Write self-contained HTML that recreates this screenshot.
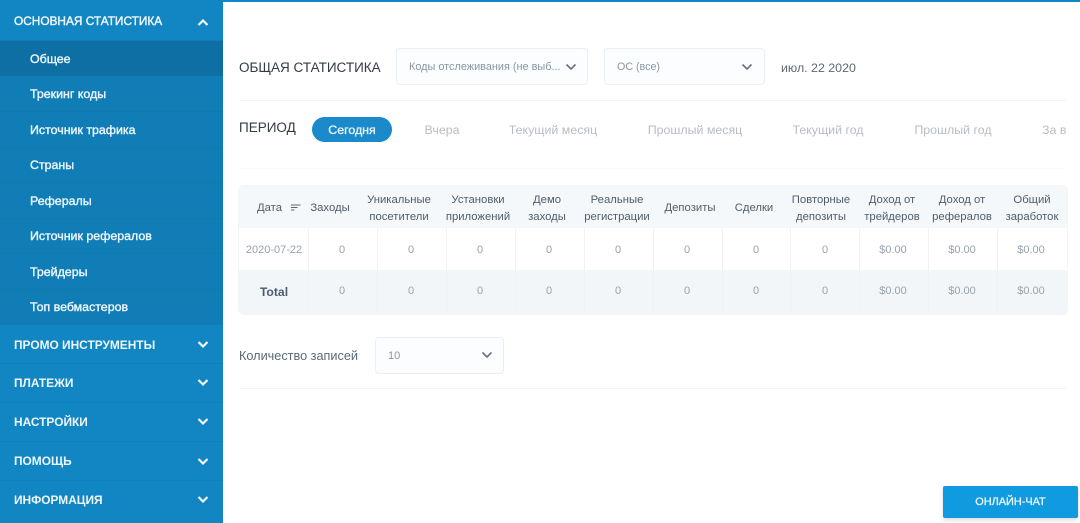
<!DOCTYPE html>
<html lang="ru"><head><meta charset="utf-8"><title>Статистика</title>
<style>
html,body{margin:0;padding:0;width:1080px;height:523px;overflow:hidden;background:#fff;font-family:"Liberation Sans",sans-serif}
.a{position:absolute;white-space:nowrap}
.c{position:absolute;white-space:nowrap;text-align:center;transform:translateX(-50%)}
.side{position:absolute;left:0;top:0;width:223px;height:523px;background:#1285c3}
.sub{position:absolute;left:0;top:40px;width:223px;height:285px;background:#107db7}
.act{position:absolute;left:0;top:41px;width:223px;height:35px;background:#0e6fa4}
.si{position:absolute;left:30px;color:#eaf5fb;font-size:12.4px;-webkit-text-stroke:.4px #eaf5fb;line-height:16px;white-space:nowrap}
.mi{position:absolute;left:14px;color:#eef7fc;font-size:11.9px;font-weight:bold;line-height:16px;white-space:nowrap}
.sl{position:absolute;left:0;width:223px;height:1px;background:#1179b0}
.ml{position:absolute;left:0;width:223px;height:1px;background:#117fba}
svg{position:absolute;display:block}
.sel{position:absolute;background:#fbfdfe;border:1px solid #e9f0f4;border-radius:4px;box-sizing:border-box}
.hr{position:absolute;height:1px;background:#f2f5f7}
.per{color:#b6bdc4;font-size:12.4px;line-height:16px}
.th{color:#4f5d6b;font-size:11.3px;line-height:17px}
.td{color:#98a2ad;font-size:11px;line-height:14px}
.vl{position:absolute;width:1px;background:#eef2f5}
</style></head><body>
<div class="a" style="left:0;top:0;width:1080px;height:2px;background:#1285c3"></div>
<div class="side"></div>
<div class="sub"></div>
<div class="act"></div>
<div class="sl" style="top:111px"></div><div class="sl" style="top:147px"></div><div class="sl" style="top:182px"></div><div class="sl" style="top:218px"></div><div class="sl" style="top:253px"></div><div class="sl" style="top:289px"></div>
<div class="ml" style="top:363px"></div><div class="ml" style="top:402px"></div><div class="ml" style="top:441px"></div><div class="ml" style="top:480px"></div>

<div class="mi" style="top:13px;font-weight:normal;font-size:11.85px;-webkit-text-stroke:.4px #eef7fc">ОСНОВНАЯ СТАТИСТИКА</div>
<svg style="left:197px;top:18px" width="12" height="9" viewBox="0 0 12 9"><path d="M1.5 7L6 2.5L10.5 7" fill="none" stroke="#f2f9fd" stroke-width="2.2"/></svg>
<div class="si" style="top:51px">Общее</div>
<div class="si" style="top:86px">Трекинг коды</div>
<div class="si" style="top:122px">Источник трафика</div>
<div class="si" style="top:157px">Страны</div>
<div class="si" style="top:193px">Рефералы</div>
<div class="si" style="top:228px">Источник рефералов</div>
<div class="si" style="top:264px">Трейдеры</div>
<div class="si" style="top:299px">Топ вебмастеров</div>
<div class="mi" style="top:337px">ПРОМО ИНСТРУМЕНТЫ</div>
<div class="mi" style="top:375px">ПЛАТЕЖИ</div>
<div class="mi" style="top:414px">НАСТРОЙКИ</div>
<div class="mi" style="top:453px">ПОМОЩЬ</div>
<div class="mi" style="top:492px">ИНФОРМАЦИЯ</div>
<svg style="left:197px;top:340px" width="12" height="9" viewBox="0 0 12 9"><path d="M1.5 2L6 6.5L10.5 2" fill="none" stroke="#f2f9fd" stroke-width="2.2"/></svg>
<svg style="left:197px;top:378px" width="12" height="9" viewBox="0 0 12 9"><path d="M1.5 2L6 6.5L10.5 2" fill="none" stroke="#f2f9fd" stroke-width="2.2"/></svg>
<svg style="left:197px;top:417px" width="12" height="9" viewBox="0 0 12 9"><path d="M1.5 2L6 6.5L10.5 2" fill="none" stroke="#f2f9fd" stroke-width="2.2"/></svg>
<svg style="left:197px;top:457px" width="12" height="9" viewBox="0 0 12 9"><path d="M1.5 2L6 6.5L10.5 2" fill="none" stroke="#f2f9fd" stroke-width="2.2"/></svg>
<svg style="left:197px;top:495px" width="12" height="9" viewBox="0 0 12 9"><path d="M1.5 2L6 6.5L10.5 2" fill="none" stroke="#f2f9fd" stroke-width="2.2"/></svg>

<div class="a" style="left:239px;top:59px;color:#333b44;font-size:13.5px;line-height:18px">ОБЩАЯ СТАТИСТИКА</div>
<div class="sel" style="left:396px;top:48px;width:192px;height:37px"></div>
<div class="a" style="left:409px;top:60px;color:#8a96a3;font-size:10.9px;line-height:15px">Коды отслеживания (не выб...</div>
<svg style="left:565px;top:63px" width="12" height="8" viewBox="0 0 12 8"><path d="M1.5 1.5L6 6L10.5 1.5" fill="none" stroke="#66727f" stroke-width="1.6"/></svg>
<div class="sel" style="left:604px;top:48px;width:161px;height:37px"></div>
<div class="a" style="left:617px;top:60px;color:#8a96a3;font-size:10.7px;line-height:15px">ОС (все)</div>
<svg style="left:741px;top:63px" width="12" height="8" viewBox="0 0 12 8"><path d="M1.5 1.5L6 6L10.5 1.5" fill="none" stroke="#66727f" stroke-width="1.6"/></svg>
<div class="a" style="left:781px;top:61px;color:#5d6874;font-size:12.4px;line-height:15px">июл. 22 2020</div>
<div class="hr" style="left:239px;top:100px;width:827px"></div>

<div class="a" style="left:239px;top:119px;color:#333b44;font-size:13.5px;line-height:18px">ПЕРИОД</div>
<div class="a" style="left:312px;top:117px;width:80px;height:25px;border-radius:13px;background:#1a8acb"></div>
<div class="c" style="left:352px;top:122px;color:#e4f2fa;font-size:12.4px;line-height:16px;-webkit-text-stroke:.35px #e4f2fa">Сегодня</div>
<div class="c per" style="left:442px;top:122px">Вчера</div>
<div class="c per" style="left:553px;top:122px">Текущий месяц</div>
<div class="c per" style="left:695px;top:122px">Прошлый месяц</div>
<div class="c per" style="left:828px;top:122px">Текущий год</div>
<div class="c per" style="left:953px;top:122px">Прошлый год</div>
<div class="a per" style="left:1042px;top:122px">За в</div>
<div class="hr" style="left:239px;top:168px;width:827px;background:#fafbfc"></div>

<div class="a" style="left:239px;top:186px;width:828px;height:128px;border-radius:5px;background:#fff;box-shadow:0 0 0 1px #f3f5f7;overflow:hidden">
  <div class="a" style="left:0;top:0;width:828px;height:42px;background:#f5f8fa"></div>
  <div class="a" style="left:0;top:84px;width:828px;height:44px;background:#f3f6f8"></div>
</div>
<div class="vl" style="left:308px;top:228px;height:86px"></div>
<div class="vl" style="left:377px;top:228px;height:86px"></div>
<div class="vl" style="left:446px;top:228px;height:86px"></div>
<div class="vl" style="left:515px;top:228px;height:86px"></div>
<div class="vl" style="left:584px;top:228px;height:86px"></div>
<div class="vl" style="left:653px;top:228px;height:86px"></div>
<div class="vl" style="left:722px;top:228px;height:86px"></div>
<div class="vl" style="left:790px;top:228px;height:86px"></div>
<div class="vl" style="left:859px;top:228px;height:86px"></div>
<div class="vl" style="left:928px;top:228px;height:86px"></div>
<div class="vl" style="left:997px;top:228px;height:86px"></div>

<div class="a th" style="left:257px;top:200px">Дата</div>
<svg style="left:291px;top:204px" width="10" height="8" viewBox="0 0 10 8"><path d="M0 1H9.5M0 3.5H6.5M0 6H3.5" fill="none" stroke="#5b6875" stroke-width="1"/></svg>
<div class="c th" style="left:330px;top:200px">Заходы</div>
<div class="c th" style="left:399px;top:192px">Уникальные<br>посетители</div>
<div class="c th" style="left:478px;top:192px">Установки<br>приложений</div>
<div class="c th" style="left:547px;top:192px">Демо<br>заходы</div>
<div class="c th" style="left:617px;top:192px">Реальные<br>регистрации</div>
<div class="c th" style="left:690px;top:200px">Депозиты</div>
<div class="c th" style="left:754px;top:200px">Сделки</div>
<div class="c th" style="left:821px;top:192px">Повторные<br>депозиты</div>
<div class="c th" style="left:892px;top:192px">Доход от<br>трейдеров</div>
<div class="c th" style="left:962px;top:192px">Доход от<br>рефералов</div>
<div class="c th" style="left:1032px;top:192px">Общий<br>заработок</div>

<div class="c td" style="left:274px;top:243px">2020-07-22</div>
<div class="c td" style="left:342px;top:243px">0</div>
<div class="c td" style="left:411px;top:243px">0</div>
<div class="c td" style="left:480px;top:243px">0</div>
<div class="c td" style="left:549px;top:243px">0</div>
<div class="c td" style="left:618px;top:243px">0</div>
<div class="c td" style="left:687px;top:243px">0</div>
<div class="c td" style="left:756px;top:243px">0</div>
<div class="c td" style="left:825px;top:243px">0</div>
<div class="c td" style="left:893px;top:243px">$0.00</div>
<div class="c td" style="left:962px;top:243px">$0.00</div>
<div class="c td" style="left:1031px;top:243px">$0.00</div>

<div class="c" style="left:274px;top:285px;color:#4a5c70;font-size:12.2px;font-weight:bold;line-height:15px">Total</div>
<div class="c td" style="left:342px;top:284px">0</div>
<div class="c td" style="left:411px;top:284px">0</div>
<div class="c td" style="left:480px;top:284px">0</div>
<div class="c td" style="left:549px;top:284px">0</div>
<div class="c td" style="left:618px;top:284px">0</div>
<div class="c td" style="left:687px;top:284px">0</div>
<div class="c td" style="left:756px;top:284px">0</div>
<div class="c td" style="left:825px;top:284px">0</div>
<div class="c td" style="left:893px;top:284px">$0.00</div>
<div class="c td" style="left:962px;top:284px">$0.00</div>
<div class="c td" style="left:1031px;top:284px">$0.00</div>

<div class="a" style="left:239px;top:349px;color:#5a6978;font-size:12.7px;line-height:15px">Количество записей</div>
<div class="sel" style="left:375px;top:337px;width:129px;height:37px"></div>
<div class="a" style="left:388px;top:349px;color:#8a96a3;font-size:11px;line-height:14px">10</div>
<svg style="left:481px;top:351px" width="12" height="8" viewBox="0 0 12 8"><path d="M1.5 1.5L6 6L10.5 1.5" fill="none" stroke="#66727f" stroke-width="1.6"/></svg>
<div class="hr" style="left:239px;top:388px;width:827px"></div>

<div class="a" style="left:943px;top:486px;width:135px;height:32px;background:#109be0;border-radius:2px;box-shadow:0 2px 5px rgba(0,0,0,.15)"></div>
<div class="c" style="left:1010.5px;top:495px;color:#e8f5fc;font-size:10.9px;line-height:14px;-webkit-text-stroke:.35px #e8f5fc">ОНЛАЙН-ЧАТ</div>
</body></html>
